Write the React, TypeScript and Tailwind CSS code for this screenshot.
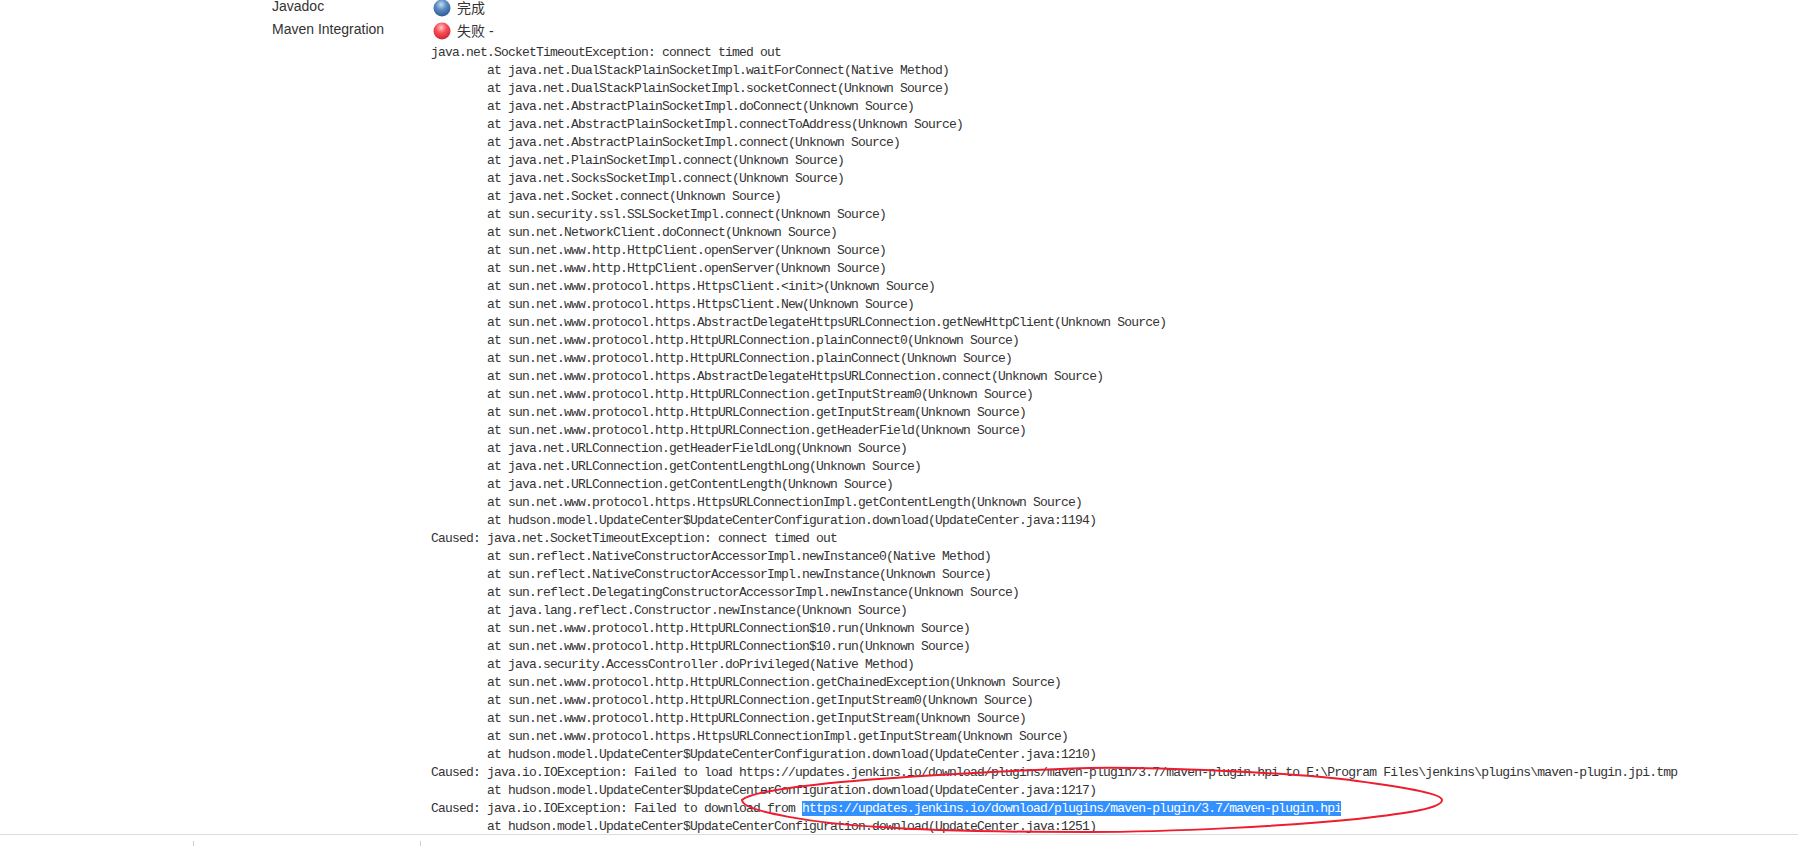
const TRACE = `java.net.SocketTimeoutException: connect timed out
	at java.net.DualStackPlainSocketImpl.waitForConnect(Native Method)
	at java.net.DualStackPlainSocketImpl.socketConnect(Unknown Source)
	at java.net.AbstractPlainSocketImpl.doConnect(Unknown Source)
	at java.net.AbstractPlainSocketImpl.connectToAddress(Unknown Source)
	at java.net.AbstractPlainSocketImpl.connect(Unknown Source)
	at java.net.PlainSocketImpl.connect(Unknown Source)
	at java.net.SocksSocketImpl.connect(Unknown Source)
	at java.net.Socket.connect(Unknown Source)
	at sun.security.ssl.SSLSocketImpl.connect(Unknown Source)
	at sun.net.NetworkClient.doConnect(Unknown Source)
	at sun.net.www.http.HttpClient.openServer(Unknown Source)
	at sun.net.www.http.HttpClient.openServer(Unknown Source)
	at sun.net.www.protocol.https.HttpsClient.<init>(Unknown Source)
	at sun.net.www.protocol.https.HttpsClient.New(Unknown Source)
	at sun.net.www.protocol.https.AbstractDelegateHttpsURLConnection.getNewHttpClient(Unknown Source)
	at sun.net.www.protocol.http.HttpURLConnection.plainConnect0(Unknown Source)
	at sun.net.www.protocol.http.HttpURLConnection.plainConnect(Unknown Source)
	at sun.net.www.protocol.https.AbstractDelegateHttpsURLConnection.connect(Unknown Source)
	at sun.net.www.protocol.http.HttpURLConnection.getInputStream0(Unknown Source)
	at sun.net.www.protocol.http.HttpURLConnection.getInputStream(Unknown Source)
	at sun.net.www.protocol.http.HttpURLConnection.getHeaderField(Unknown Source)
	at java.net.URLConnection.getHeaderFieldLong(Unknown Source)
	at java.net.URLConnection.getContentLengthLong(Unknown Source)
	at java.net.URLConnection.getContentLength(Unknown Source)
	at sun.net.www.protocol.https.HttpsURLConnectionImpl.getContentLength(Unknown Source)
	at hudson.model.UpdateCenter$UpdateCenterConfiguration.download(UpdateCenter.java:1194)
Caused: java.net.SocketTimeoutException: connect timed out
	at sun.reflect.NativeConstructorAccessorImpl.newInstance0(Native Method)
	at sun.reflect.NativeConstructorAccessorImpl.newInstance(Unknown Source)
	at sun.reflect.DelegatingConstructorAccessorImpl.newInstance(Unknown Source)
	at java.lang.reflect.Constructor.newInstance(Unknown Source)
	at sun.net.www.protocol.http.HttpURLConnection$10.run(Unknown Source)
	at sun.net.www.protocol.http.HttpURLConnection$10.run(Unknown Source)
	at java.security.AccessController.doPrivileged(Native Method)
	at sun.net.www.protocol.http.HttpURLConnection.getChainedException(Unknown Source)
	at sun.net.www.protocol.http.HttpURLConnection.getInputStream0(Unknown Source)
	at sun.net.www.protocol.http.HttpURLConnection.getInputStream(Unknown Source)
	at sun.net.www.protocol.https.HttpsURLConnectionImpl.getInputStream(Unknown Source)
	at hudson.model.UpdateCenter$UpdateCenterConfiguration.download(UpdateCenter.java:1210)
Caused: java.io.IOException: Failed to load https://updates.jenkins.io/download/plugins/maven-plugin/3.7/maven-plugin.hpi to E:\\Program Files\\jenkins\\plugins\\maven-plugin.jpi.tmp
	at hudson.model.UpdateCenter$UpdateCenterConfiguration.download(UpdateCenter.java:1217)
Caused: java.io.IOException: Failed to download from `;

function Ball({ id, light, mid, dark }: { id: string; light: string; mid: string; dark: string }) {
  return (
    <svg width="18" height="18" viewBox="0 0 18 18" className="shrink-0">
      <defs>
        <radialGradient id={id} cx="0.45" cy="0.3" r="0.7">
          <stop offset="0" stopColor={light} />
          <stop offset="0.45" stopColor={mid} />
          <stop offset="1" stopColor={dark} />
        </radialGradient>
      </defs>
      <circle cx="9" cy="9" r="8.5" fill={`url(#${id})`} />
    </svg>
  );
}

export default function App() {
  return (
    <div className="h-[846px] w-full overflow-hidden bg-white font-['Liberation_Sans',sans-serif] text-[14px] text-[#333]">
      <div className="relative h-[834px] overflow-hidden">
        <div className="-mt-[1px] grid grid-cols-[161px_1fr] gap-y-[5px] pl-[272px]">
          <div className="h-[18px] leading-[14px]">Javadoc</div>
          <div className="flex h-[18px] items-center gap-[6px] font-['Liberation_Sans','Noto_Sans_CJK_SC',sans-serif]">
            <Ball id="blue" light="#c9dcf0" mid="#5b8cc2" dark="#2d5a94" />
            <span>完成</span>
          </div>
          <div className="h-[18px] leading-[14px]">Maven Integration</div>
          <div className="flex h-[18px] items-center gap-[6px] font-['Liberation_Sans','Noto_Sans_CJK_SC',sans-serif]">
            <Ball id="red" light="#ffc9cc" mid="#f8505a" dark="#d0242e" />
            <span>失败 -</span>
          </div>
        </div>
        <pre className="ml-[431px] mt-[4px] font-['Liberation_Mono',monospace] text-[13px] leading-[18px] tracking-[-0.8px] text-[#333] [tab-size:8]">
          {TRACE}
          <span className="bg-[#3390ff] text-white">https://updates.jenkins.io/download/plugins/maven-plugin/3.7/maven-plugin.hpi</span>
          {"\n\tat hudson.model.UpdateCenter$UpdateCenterConfiguration.download(UpdateCenter.java:1251)"}
        </pre>
        {/* red hand-drawn ring around the url */}
        <svg className="pointer-events-none absolute left-[730px] top-[758px]" width="720" height="76" viewBox="0 0 720 76" fill="none">
          <path
            d="M12 42 C 20 34, 70 28, 111 24 C 180 18, 290 12, 359 10 C 420 9, 560 14, 627 23 C 680 30, 712 36, 712 42 C 712 50, 680 55, 627 61 C 560 68, 440 74, 359 74 C 270 74, 190 72, 150 69 C 90 66, 12 54, 12 42 Z"
            stroke="#ee1c2e"
            strokeWidth="2"
          />
        </svg>
      </div>
      <div className="flex h-[12px] border-t border-[#dcdcdc]">
        <div className="mt-[6px] ml-[193px] h-[5px] w-px bg-[#cfcfcf]" />
        <div className="mt-[6px] ml-[226px] h-[5px] w-px bg-[#cfcfcf]" />
      </div>
    </div>
  );
}
